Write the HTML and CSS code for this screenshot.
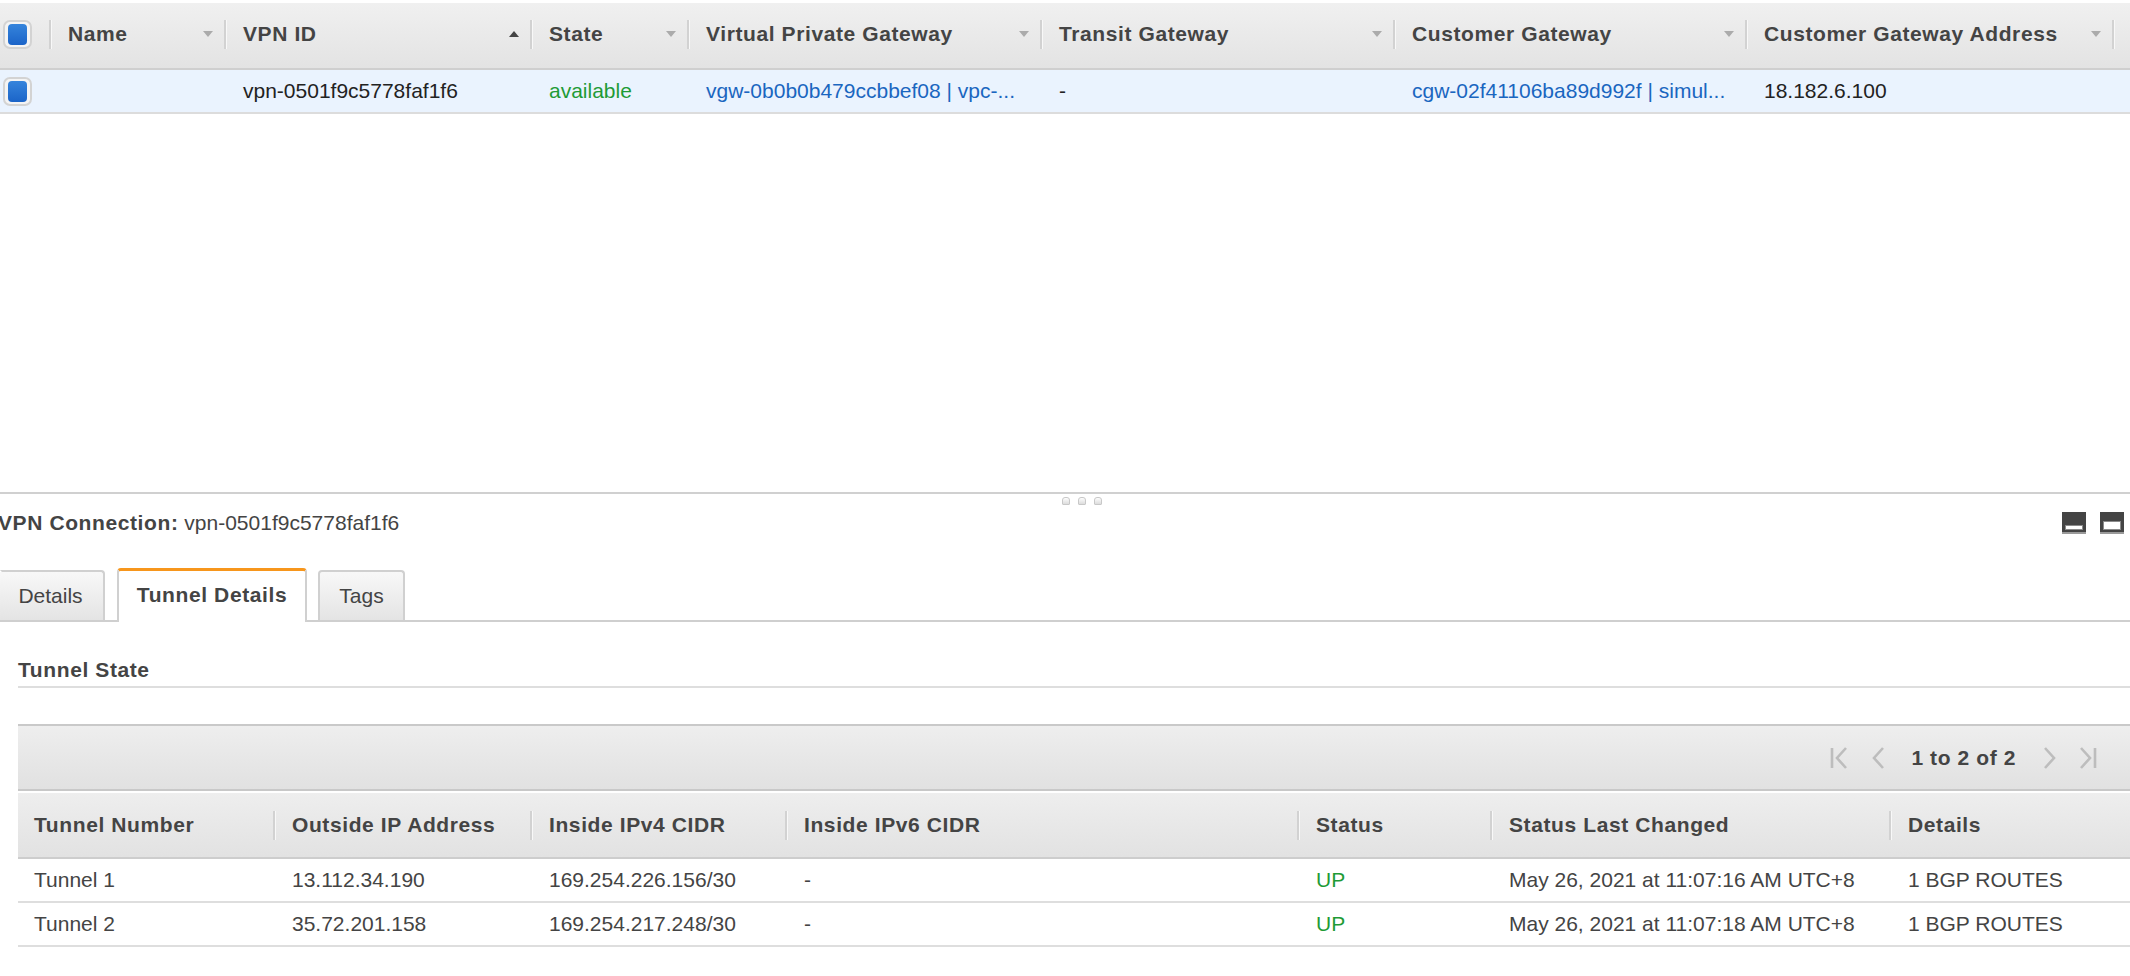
FILE: index.html
```html
<!DOCTYPE html>
<html>
<head>
<meta charset="utf-8">
<link rel="stylesheet" href="styles.css">
</head>
<body>
<div class="page">
  <section class="top">
    <div class="ghead">
      <div class="hc w-check"><span class="cb"><span class="cb-in"></span></span></div>
      <div class="hc w-name"><span class="sep"></span><span class="lbl">Name</span><span class="arr"></span></div>
      <div class="hc w-id"><span class="sep"></span><span class="lbl">VPN ID</span><span class="arr up"></span></div>
      <div class="hc w-state"><span class="sep"></span><span class="lbl">State</span><span class="arr"></span></div>
      <div class="hc w-vgw"><span class="sep"></span><span class="lbl">Virtual Private Gateway</span><span class="arr"></span></div>
      <div class="hc w-tgw"><span class="sep"></span><span class="lbl">Transit Gateway</span><span class="arr"></span></div>
      <div class="hc w-cgw"><span class="sep"></span><span class="lbl">Customer Gateway</span><span class="arr"></span></div>
      <div class="hc w-cga"><span class="sep"></span><span class="lbl">Customer Gateway Address</span><span class="arr"></span></div>
      <div class="hc w-rest"><span class="sep"></span></div>
    </div>
    <div class="grow">
      <div class="rc w-check"><span class="cb"><span class="cb-in"></span></span></div>
      <div class="rc w-name"></div>
      <div class="rc w-id">vpn-0501f9c5778faf1f6</div>
      <div class="rc w-state ok">available</div>
      <div class="rc w-vgw link">vgw-0b0b0b479ccbbef08 | vpc-...</div>
      <div class="rc w-tgw">-</div>
      <div class="rc w-cgw link">cgw-02f41106ba89d992f | simul...</div>
      <div class="rc w-cga">18.182.6.100</div>
      <div class="rc w-rest"></div>
    </div>
  </section>

  <div class="splitter">
    <span class="grip"></span><span class="grip"></span><span class="grip"></span>
  </div>

  <section class="detail">
    <div class="title-row">
      <div class="title"><b>VPN Connection:</b> vpn-0501f9c5778faf1f6</div>
      <div class="win-icons">
        <span class="win"><span class="win-bar small"></span></span>
        <span class="win"><span class="win-bar big"></span></span>
      </div>
    </div>

    <div class="tabs">
      <div class="tab t-details">Details</div>
      <div class="tab t-tunnel active">Tunnel Details</div>
      <div class="tab t-tags">Tags</div>
    </div>

    <div class="tab-body">
      <div class="section-title">Tunnel State</div>

      <div class="tgrid">
        <div class="pager">
          <svg class="pg pg-first" width="18" height="22" viewBox="0 0 18 22"><path d="M2 1 V21 M16 1 L7 11 L16 21" fill="none" stroke="#bdbdbd" stroke-width="2.6"/></svg>
          <svg class="pg pg-prev" width="14" height="22" viewBox="0 0 14 22"><path d="M12 1 L3 11 L12 21" fill="none" stroke="#bdbdbd" stroke-width="2.6"/></svg>
          <span class="pg-text">1 to 2 of 2</span>
          <svg class="pg pg-next" width="14" height="22" viewBox="0 0 14 22"><path d="M2 1 L11 11 L2 21" fill="none" stroke="#bdbdbd" stroke-width="2.6"/></svg>
          <svg class="pg pg-last" width="18" height="22" viewBox="0 0 18 22"><path d="M2 1 L11 11 L2 21 M16 1 V21" fill="none" stroke="#bdbdbd" stroke-width="2.6"/></svg>
        </div>
        <div class="thead">
          <div class="th c1"><span class="lbl">Tunnel Number</span></div>
          <div class="th c2"><span class="sep"></span><span class="lbl">Outside IP Address</span></div>
          <div class="th c3"><span class="sep"></span><span class="lbl">Inside IPv4 CIDR</span></div>
          <div class="th c4"><span class="sep"></span><span class="lbl">Inside IPv6 CIDR</span></div>
          <div class="th c5"><span class="sep"></span><span class="lbl">Status</span></div>
          <div class="th c6"><span class="sep"></span><span class="lbl">Status Last Changed</span></div>
          <div class="th c7"><span class="sep"></span><span class="lbl">Details</span></div>
        </div>
        <div class="trow">
          <div class="td c1">Tunnel 1</div>
          <div class="td c2">13.112.34.190</div>
          <div class="td c3">169.254.226.156/30</div>
          <div class="td c4">-</div>
          <div class="td c5 ok">UP</div>
          <div class="td c6">May 26, 2021 at 11:07:16 AM UTC+8</div>
          <div class="td c7">1 BGP ROUTES</div>
        </div>
        <div class="trow">
          <div class="td c1">Tunnel 2</div>
          <div class="td c2">35.72.201.158</div>
          <div class="td c3">169.254.217.248/30</div>
          <div class="td c4">-</div>
          <div class="td c5 ok">UP</div>
          <div class="td c6">May 26, 2021 at 11:07:18 AM UTC+8</div>
          <div class="td c7">1 BGP ROUTES</div>
        </div>
      </div>
    </div>
  </section>
</div>
</body>
</html>
```

FILE: styles.css
```css
html, body {
  margin: 0;
  padding: 0;
  background: #fff;
}
body {
  width: 2130px;
  height: 976px;
  overflow: hidden;
  font-family: "Liberation Sans", Arial, Helvetica, sans-serif;
  font-size: 21px;
  color: #444;
}
b, .hc, .th, .tab.active, .section-title, .pg-text {
  letter-spacing: 0.6px;
}

/* ---------- top grid ---------- */
.top {
  height: 492px;
  padding-top: 3px;
  box-sizing: border-box;
}
.ghead {
  display: flex;
  height: 65px;
  background: linear-gradient(#f0f0f0, #e3e3e3);
  border-bottom: 2px solid #cfcfcf;
}
.grow {
  display: flex;
  height: 42px;
  background: #eaf3fe;
  border-bottom: 2px solid #dcdcdc;
  color: #222;
}
.w-check { width: 49px; }
.w-name { width: 175px; }
.w-id { width: 306px; }
.w-state { width: 157px; }
.w-vgw { width: 353px; }
.w-tgw { width: 353px; }
.w-cgw { width: 352px; }
.w-cga { width: 367px; }

.hc, .rc {
  box-sizing: border-box;
  display: flex;
  align-items: center;
  flex: none;
  white-space: nowrap;
  overflow: hidden;
}
.w-rest { flex: 1 1 auto; }
.hc {
  font-weight: bold;
  color: #444;
  padding-bottom: 3px;
}
.rc {
  padding-left: 19px;
}
.rc.w-check { padding-left: 3px; }
.hc.w-check { padding-left: 3px; }

.sep {
  flex: none;
  width: 2px;
  height: 29px;
  background: #d2d2d2;
  box-shadow: 1px 0 0 #f8f8f8;
}
.hc .lbl {
  flex: 1;
  margin-left: 17px;
}
.arr {
  flex: none;
  width: 0;
  height: 0;
  margin-right: 11px;
  border-left: 5px solid transparent;
  border-right: 5px solid transparent;
  border-top: 6px solid #ababab;
}
.arr.up {
  border-top: none;
  border-bottom: 6px solid #444;
}

.cb {
  box-sizing: border-box;
  width: 29px;
  height: 29px;
  border: 2px solid #d3d3d3;
  border-radius: 7px;
  background: #f4f4f4;
  display: flex;
  align-items: center;
  justify-content: center;
}
.cb-in {
  width: 19px;
  height: 21px;
  border-radius: 4px;
  background: linear-gradient(#3584dc, #1b64c8);
}

.ok { color: #1e9b36; }
.link { color: #1a66c0; }

/* ---------- splitter ---------- */
.splitter {
  border-top: 2px solid #d0d0d0;
  display: flex;
  align-items: flex-start;
  padding-left: 1062px;
  gap: 8px;
  padding-top: 3px;
  height: 9px;
}
.grip {
  width: 6px;
  height: 6px;
  border: 1px solid #c8c8c8;
  border-radius: 3px 3px 1px 1px;
  background: linear-gradient(#fdfdfd, #dcdcdc);
}

/* ---------- detail ---------- */
.title-row {
  display: flex;
  align-items: center;
  justify-content: space-between;
  height: 34px;
}
.title {
  margin-left: -2px;
  color: #444;
}
.win-icons {
  display: flex;
  gap: 14px;
  margin-right: 6px;
}
.win {
  box-sizing: border-box;
  width: 24px;
  height: 22px;
  background: #444;
  border-bottom: 2px solid #9a9a9a;
  display: flex;
  align-items: flex-end;
  justify-content: center;
  padding-bottom: 2px;
}
.win-bar {
  box-sizing: border-box;
  width: 18px;
  background: #fff;
  border: 1px solid #8a8a8a;
}
.win-bar.small { height: 5px; }
.win-bar.big { height: 9px; }

.tabs {
  display: flex;
  align-items: flex-end;
  margin-top: 28px;
  height: 52px;
  border-bottom: 2px solid #cfcfcf;
}
.tab {
  box-sizing: border-box;
  height: 50px;
  border: 2px solid #d0d0d0;
  border-bottom: none;
  border-radius: 4px 4px 0 0;
  background: linear-gradient(#f8f8f8, #e4e4e4);
  display: flex;
  align-items: center;
  justify-content: center;
  color: #444;
}
.t-details { width: 105px; border-left-color: transparent; border-top-left-radius: 0; padding-right: 4px; }
.t-tunnel { width: 190px; margin-left: 12px; }
.t-tags { width: 87px; margin-left: 11px; }
.tab.active {
  height: 54px;
  margin-bottom: -2px;
  background: #fff;
  border-top: 3px solid #f7961c;
  font-weight: bold;
  padding-bottom: 4px;
}

.tab-body {
  padding-left: 18px;
}
.section-title {
  margin-top: 36px;
  line-height: 24px;
  padding-bottom: 4px;
  border-bottom: 2px solid #dedede;
  font-weight: bold;
  color: #444;
}

.tgrid {
  margin-top: 36px;
  border-top: 2px solid #c9c9c9;
}
.pager {
  height: 63px;
  background: linear-gradient(#eeeeee, #e1e1e1);
  border-bottom: 2px solid #c8c8c8;
  margin-bottom: 2px;
  display: flex;
  align-items: center;
  justify-content: flex-end;
  padding-right: 33px;
}
.pg { display: block; flex: none; }
.pg-prev { margin-left: 23px; }
.pg-text {
  margin-left: 26px;
  margin-right: 27px;
  font-weight: bold;
  color: #444;
  font-size: 21px;
}
.pg-last { margin-left: 22px; }

.thead {
  display: flex;
  height: 64px;
  background: linear-gradient(#eeeeee, #e2e2e2);
  border-bottom: 2px solid #cdcdcd;
}
.trow {
  display: flex;
  height: 42px;
  border-bottom: 2px solid #dedede;
}
.th, .td {
  box-sizing: border-box;
  display: flex;
  align-items: center;
  flex: none;
  white-space: nowrap;
}
.th { font-weight: bold; color: #444; }
.th .lbl { margin-left: 17px; }
.th.c1 .lbl { margin-left: 16px; }
.td { padding-left: 19px; color: #444; }
.td.c1 { padding-left: 16px; }
.td.ok { color: #1e9b36; }
.c1 { width: 255px; }
.c2 { width: 257px; }
.c3 { width: 255px; }
.c4 { width: 512px; }
.c5 { width: 193px; }
.c6 { width: 399px; }
.c7 { flex: 1 1 auto; }
```
